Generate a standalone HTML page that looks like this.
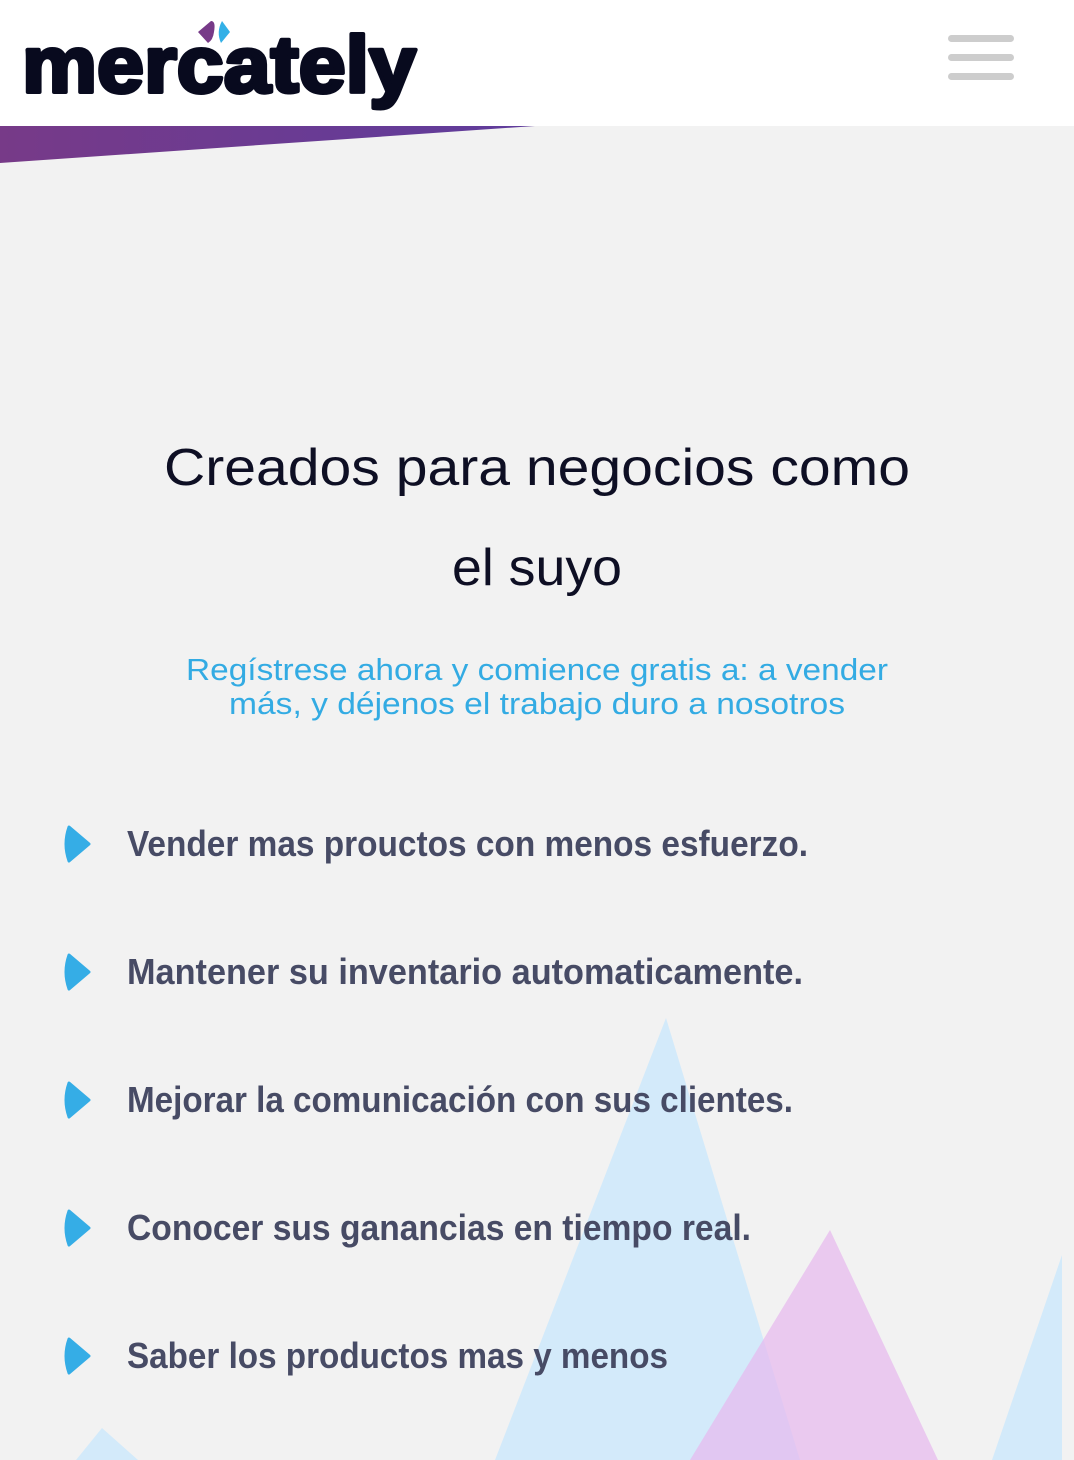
<!DOCTYPE html>
<html><head><meta charset="utf-8"><style>
html,body{margin:0;padding:0;width:1074px;height:1460px;overflow:hidden;background:#f2f2f2}
svg{display:block}
</style></head><body>
<svg width="1074" height="1460" viewBox="0 0 1074 1460" xmlns="http://www.w3.org/2000/svg">
<defs>
<linearGradient id="g" x1="0" y1="0" x2="1" y2="0"><stop offset="0" stop-color="#773a88"/><stop offset="1" stop-color="#5f3c9c"/></linearGradient>
</defs>
<rect width="1074" height="1460" fill="#f2f2f2"/>
<polygon points="666,1018 495,1460 800,1460" fill="#d3eafa"/>
<polygon points="830,1230 690,1460 938,1460" fill="#e7b8ee" opacity="0.7"/>
<polygon points="1062,1255 992,1460 1062,1460" fill="#d3eafa"/>
<polygon points="102,1428 76,1460 138,1460" fill="#d3eafa"/>
<rect width="1074" height="126" fill="#fff"/>
<polygon points="0,126 535,126 0,163" fill="url(#g)"/>
<text x="22" y="92" font-family="Liberation Sans, sans-serif" font-weight="bold" font-size="80" fill="#080a1e" stroke="#080a1e" stroke-width="4" stroke-linejoin="round" textLength="394" lengthAdjust="spacingAndGlyphs">mercately</text>
<path d="M211,21 Q216,21 214,32 Q213,40 208,43 L198,32 Z" fill="#773a88"/>
<path d="M222,21 L230,32 L221,43 Q216,32 222,21Z" fill="#33b0e7"/>
<rect x="948" y="35" width="66" height="7" rx="3.5" fill="#cdcdcd"/>
<rect x="948" y="54" width="66" height="7" rx="3.5" fill="#cdcdcd"/>
<rect x="948" y="73" width="66" height="7" rx="3.5" fill="#cdcdcd"/>
<g font-family="Liberation Sans, sans-serif" fill="#0e0f24" font-size="52">
<text x="164" y="485" textLength="746" lengthAdjust="spacingAndGlyphs">Creados para negocios como</text>
<text x="452" y="585" textLength="170" lengthAdjust="spacingAndGlyphs">el suyo</text>
</g>
<g font-family="Liberation Sans, sans-serif" fill="#33abe3" font-size="31">
<text x="186" y="680" textLength="702" lengthAdjust="spacingAndGlyphs">Regístrese ahora y comience gratis a: a vender</text>
<text x="229" y="714" textLength="616" lengthAdjust="spacingAndGlyphs">más, y déjenos el trabajo duro a nosotros</text>
</g>
<g font-family="Liberation Sans, sans-serif" font-weight="bold" fill="#474b65" font-size="36">
<text x="127" y="856" textLength="681" lengthAdjust="spacingAndGlyphs">Vender mas prouctos con menos esfuerzo.</text>
<text x="127" y="984" textLength="676" lengthAdjust="spacingAndGlyphs">Mantener su inventario automaticamente.</text>
<text x="127" y="1112" textLength="666" lengthAdjust="spacingAndGlyphs">Mejorar la comunicación con sus clientes.</text>
<text x="127" y="1240" textLength="624" lengthAdjust="spacingAndGlyphs">Conocer sus ganancias en tiempo real.</text>
<text x="127" y="1368" textLength="541" lengthAdjust="spacingAndGlyphs">Saber los productos mas y menos</text>
</g>
<g fill="#35ade6" stroke="#35ade6" stroke-width="3" stroke-linejoin="round">
<path d="M69,827 L89,844 L69,861 Q63,844 69,827Z"/>
<path d="M69,955 L89,972 L69,989 Q63,972 69,955Z"/>
<path d="M69,1083 L89,1100 L69,1117 Q63,1100 69,1083Z"/>
<path d="M69,1211 L89,1228 L69,1245 Q63,1228 69,1211Z"/>
<path d="M69,1339 L89,1356 L69,1373 Q63,1356 69,1339Z"/>
</g>
</svg>
</body></html>
